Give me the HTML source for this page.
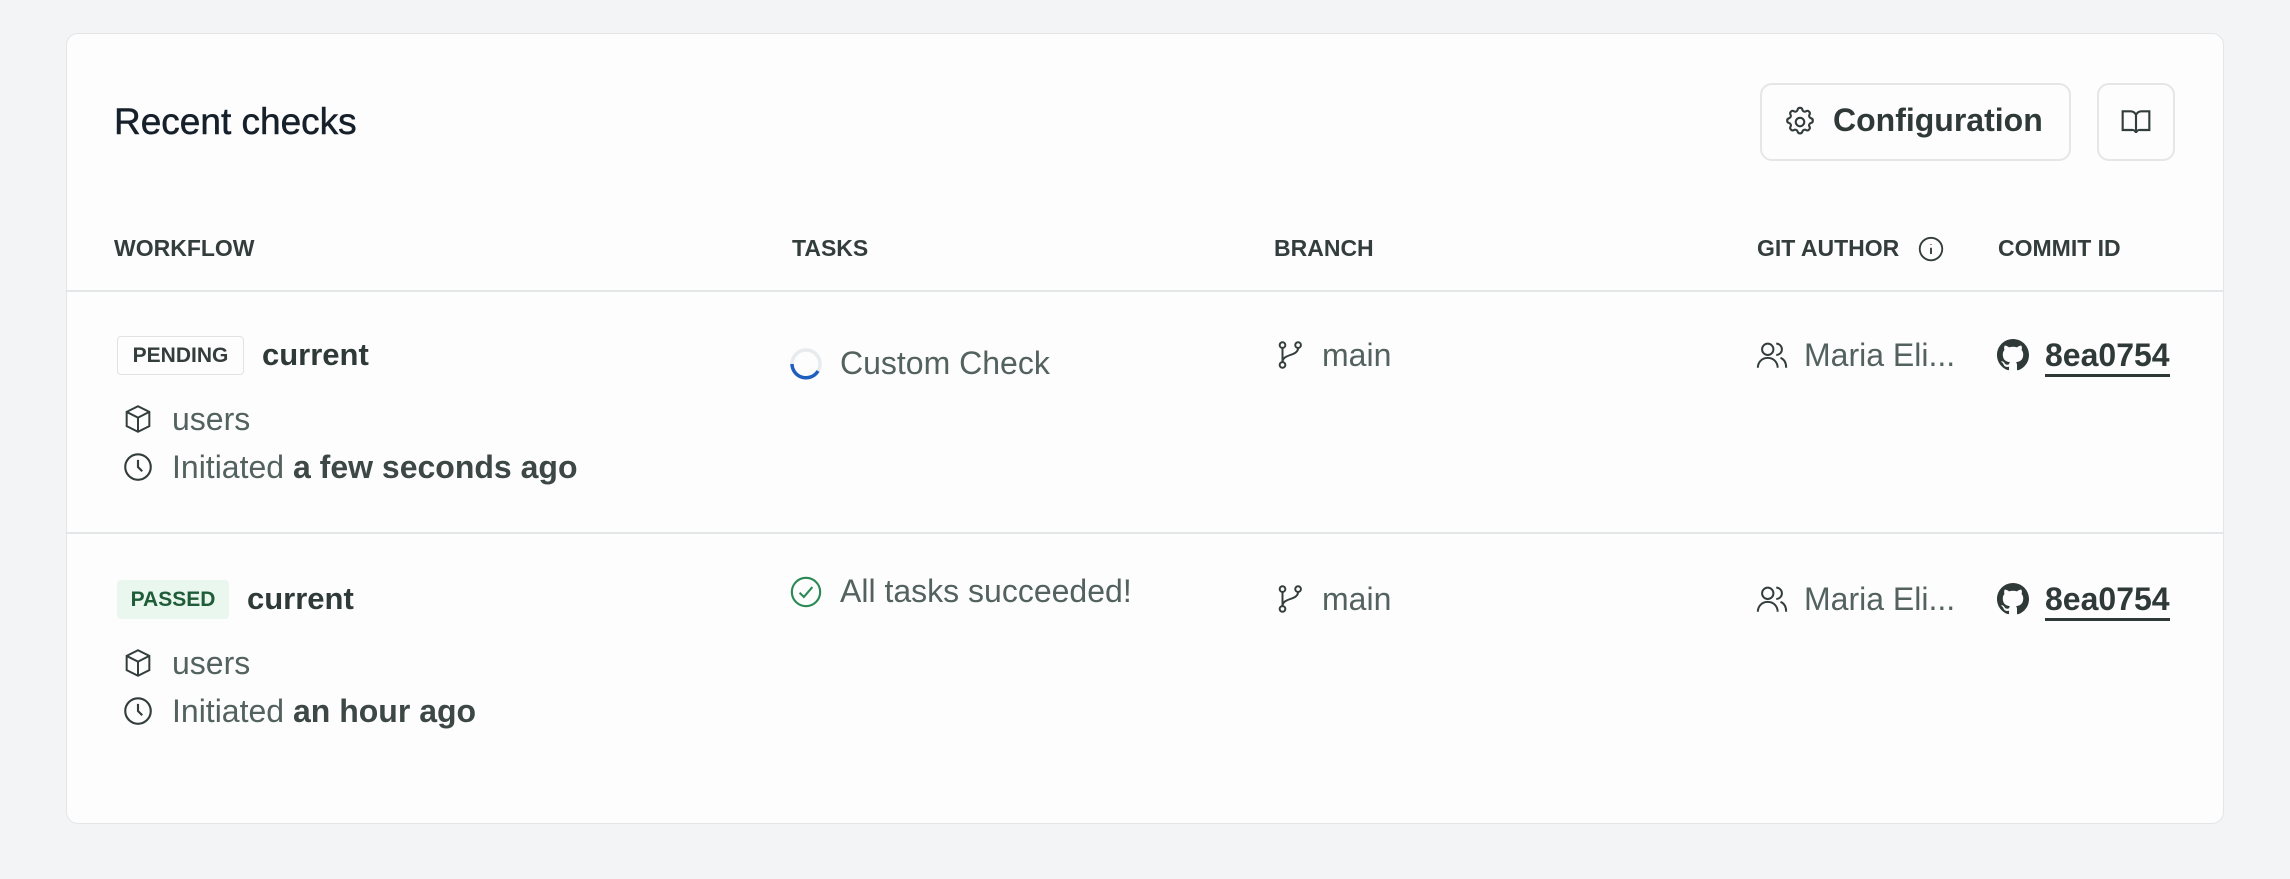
<!DOCTYPE html>
<html><head><meta charset="utf-8"><style>
*{margin:0;padding:0;box-sizing:border-box}
body{width:2290px;height:879px;background:#f3f4f6;font-family:"Liberation Sans",sans-serif;position:relative;overflow:hidden}
.card{position:absolute;left:66px;top:33px;width:2158px;height:791px;background:#fdfdfd;border:1.5px solid #e3e5e7;border-radius:12px}
.a{position:absolute;white-space:nowrap}
.title{left:114px;top:101px;font-size:37px;color:#16202a;-webkit-text-stroke:0.5px #16202a}
.btn{position:absolute;border:2px solid #e4e6e7;border-radius:12px;background:#fdfdfd}
.th{font-size:23px;font-weight:bold;color:#333d3c;top:235px}
.hr{position:absolute;left:67px;width:2156px;height:2px;background:#e4e7e8}
.t{font-size:32px;color:#53625f}
.b{font-weight:bold;color:#3d4846}
.cur{font-size:31px;font-weight:bold;color:#2f3a38}
.badge{position:absolute;font-size:21px;font-weight:bold;border-radius:4px;text-align:center}
svg{position:absolute}
</style></head><body>
<div class="card"></div>
<div class="a title">Recent checks</div>

<div class="btn" style="left:1760px;top:83px;width:311px;height:78px"></div>
<svg style="left:1783px;top:105px" width="34" height="34" viewBox="0 0 24 24" fill="none" stroke="#333d3c" stroke-width="1.5"><path d="M10.3 3.3c.4-1.7 3-1.7 3.4 0a1.7 1.7 0 0 0 2.6 1.1c1.5-.9 3.3.8 2.4 2.4a1.7 1.7 0 0 0 1 2.5c1.8.4 1.8 3 0 3.4a1.7 1.7 0 0 0-1 2.6c.9 1.5-.9 3.3-2.4 2.4a1.7 1.7 0 0 0-2.6 1c-.4 1.8-3 1.8-3.4 0a1.7 1.7 0 0 0-2.6-1c-1.5.9-3.3-.9-2.4-2.4a1.7 1.7 0 0 0-1-2.6c-1.8-.4-1.8-3 0-3.4a1.7 1.7 0 0 0 1-2.5c-.9-1.6.9-3.3 2.4-2.4a1.7 1.7 0 0 0 2.6-1.1z"/><circle cx="12" cy="12" r="3"/></svg>
<div class="a" style="left:1833px;top:102px;font-size:32px;font-weight:bold;color:#2f3a38">Configuration</div>
<div class="btn" style="left:2097px;top:83px;width:78px;height:78px"></div>
<svg style="left:2120px;top:106px" width="32" height="32" viewBox="0 0 24 24" fill="none" stroke="#333d3c" stroke-width="1.6"><path d="M2 4h6a4 4 0 0 1 4 3v13a3 3 0 0 0-3-2H2zM22 4h-6a4 4 0 0 0-4 3v13a3 3 0 0 1 3-2h7z"/></svg>

<div class="a th" style="left:114px">WORKFLOW</div>
<div class="a th" style="left:792px">TASKS</div>
<div class="a th" style="left:1274px">BRANCH</div>
<div class="a th" style="left:1757px">GIT AUTHOR</div>
<svg style="left:1916px;top:234px" width="30" height="30" viewBox="0 0 24 24" fill="none" stroke="#333d3c" stroke-width="1.5"><circle cx="12" cy="12" r="9"/><path d="M12 11v5M12 8v.5"/></svg>
<div class="a th" style="left:1998px">COMMIT ID</div>
<div class="hr" style="top:290px"></div>
<div class="hr" style="top:532px"></div>

<!-- row 1 -->
<div class="badge" style="left:117px;top:336px;width:127px;height:39px;line-height:37px;border:1.5px solid #e0e3e4;color:#333d3c">PENDING</div>
<div class="a cur" style="left:262px;top:337px">current</div>
<svg style="left:121px;top:402px" width="34" height="34" viewBox="0 0 24 24" fill="none" stroke="#333d3c" stroke-width="1.4"><path d="M12 3l8 4v10l-8 4-8-4V7zM4 7l8 4 8-4M12 11v10"/></svg>
<div class="a t" style="left:172px;top:401px">users</div>
<svg style="left:121px;top:450px" width="34" height="34" viewBox="0 0 24 24" fill="none" stroke="#333d3c" stroke-width="1.5"><circle cx="12" cy="12" r="9"/><path d="M12 7v5l3 3"/></svg>
<div class="a t" style="left:172px;top:449px">Initiated <span class="b">a few seconds ago</span></div>

<svg style="left:789px;top:347px" width="34" height="34" viewBox="0 0 34 34" fill="none" stroke-width="3.5"><circle cx="17" cy="17" r="14" stroke="#e8ebed"/><path d="M3 17a14 14 0 0 0 26 7" stroke="#1f5fbf"/></svg>
<div class="a t" style="left:840px;top:345px">Custom Check</div>
<svg style="left:1274px;top:338px" width="34" height="34" viewBox="0 0 24 24" fill="none" stroke="#333d3c" stroke-width="1.4"><circle cx="6" cy="5" r="2"/><circle cx="6" cy="19" r="2"/><circle cx="17" cy="5" r="2"/><path d="M6 7v10M17 7c0 6-11 4-11 10"/></svg>
<div class="a t" style="left:1322px;top:337px">main</div>
<svg style="left:1755px;top:338px" width="34" height="34" viewBox="0 0 24 24" fill="none" stroke="#333d3c" stroke-width="1.4"><circle cx="9" cy="8" r="4"/><path d="M2 21c0-4 3-7 7-7s7 3 7 7M15 4a4 4 0 0 1 0 8M18 14c2.5 1 4 3.5 4 7"/></svg>
<div class="a t" style="left:1804px;top:337px">Maria Eli...</div>
<svg style="left:1997px;top:339px" width="32" height="32" viewBox="0 0 16 16"><path fill="#2f3a38" d="M8 0C3.58 0 0 3.58 0 8c0 3.54 2.29 6.53 5.470 7.59.4.07.55-.17.55-.38v-1.33c-2.23.48-2.7-1.07-2.7-1.07-.36-.92-.89-1.17-.89-1.17-.73-.5.05-.49.05-.49.8.06 1.23.83 1.23.83.72 1.22 1.87.87 2.33.66.07-.52.28-.87.51-1.070-1.78-.2-3.64-.89-3.64-3.95 0-.87.31-1.59.82-2.15-.08-.2-.36-1.02.08-2.12 0 0 .67-.21 2.2.82a7.6 7.6 0 0 1 4 0c1.53-1.04 2.2-.82 2.2-.82.44 1.1.16 1.92.08 2.12.51.56.82 1.27.82 2.15 0 3.07-1.87 3.75-3.65 3.95.29.25.54.73.54 1.48v2.2c0 .21.15.46.55.38A8 8 0 0 0 16 8c0-4.42-3.58-8-8-8z"/></svg>
<div class="a t" style="left:2045px;top:337px;color:#2f3a38;font-weight:bold;border-bottom:3px solid #2f3a38;line-height:37px">8ea0754</div>

<!-- row 2 -->
<div class="badge" style="left:117px;top:580px;width:112px;height:39px;line-height:39px;background:#eaf7ee;color:#1f5c38">PASSED</div>
<div class="a cur" style="left:247px;top:581px">current</div>
<svg style="left:121px;top:646px" width="34" height="34" viewBox="0 0 24 24" fill="none" stroke="#333d3c" stroke-width="1.4"><path d="M12 3l8 4v10l-8 4-8-4V7zM4 7l8 4 8-4M12 11v10"/></svg>
<div class="a t" style="left:172px;top:645px">users</div>
<svg style="left:121px;top:694px" width="34" height="34" viewBox="0 0 24 24" fill="none" stroke="#333d3c" stroke-width="1.5"><circle cx="12" cy="12" r="9"/><path d="M12 7v5l3 3"/></svg>
<div class="a t" style="left:172px;top:693px">Initiated <span class="b">an hour ago</span></div>

<svg style="left:789px;top:575px" width="34" height="34" viewBox="0 0 24 24" fill="none" stroke="#2a8a55" stroke-width="1.5"><circle cx="12" cy="12" r="10"/><path d="M7.5 12.5l3 3 6-7"/></svg>
<div class="a t" style="left:840px;top:573px">All tasks succeeded!</div>
<svg style="left:1274px;top:582px" width="34" height="34" viewBox="0 0 24 24" fill="none" stroke="#333d3c" stroke-width="1.4"><circle cx="6" cy="5" r="2"/><circle cx="6" cy="19" r="2"/><circle cx="17" cy="5" r="2"/><path d="M6 7v10M17 7c0 6-11 4-11 10"/></svg>
<div class="a t" style="left:1322px;top:581px">main</div>
<svg style="left:1755px;top:582px" width="34" height="34" viewBox="0 0 24 24" fill="none" stroke="#333d3c" stroke-width="1.4"><circle cx="9" cy="8" r="4"/><path d="M2 21c0-4 3-7 7-7s7 3 7 7M15 4a4 4 0 0 1 0 8M18 14c2.5 1 4 3.5 4 7"/></svg>
<div class="a t" style="left:1804px;top:581px">Maria Eli...</div>
<svg style="left:1997px;top:583px" width="32" height="32" viewBox="0 0 16 16"><path fill="#2f3a38" d="M8 0C3.58 0 0 3.58 0 8c0 3.54 2.29 6.53 5.47 7.59.4.07.55-.17.55-.38v-1.33c-2.23.48-2.7-1.07-2.7-1.07-.36-.92-.89-1.17-.89-1.17-.73-.5.05-.49.05-.49.8.06 1.23.83 1.23.83.72 1.22 1.87.87 2.33.66.07-.52.28-.87.51-1.07-1.78-.2-3.64-.89-3.64-3.95 0-.87.31-1.59.82-2.15-.08-.2-.36-1.02.08-2.12 0 0 .67-.21 2.2.82a7.6 7.6 0 0 1 4 0c1.53-1.04 2.2-.82 2.2-.82.44 1.1.16 1.92.08 2.12.51.56.82 1.27.82 2.15 0 3.07-1.87 3.75-3.65 3.95.29.25.54.73.54 1.48v2.2c0 .21.15.46.55.38A8 8 0 0 0 16 8c0-4.42-3.58-8-8-8z"/></svg>
<div class="a t" style="left:2045px;top:581px;color:#2f3a38;font-weight:bold;border-bottom:3px solid #2f3a38;line-height:37px">8ea0754</div>
</body></html>
